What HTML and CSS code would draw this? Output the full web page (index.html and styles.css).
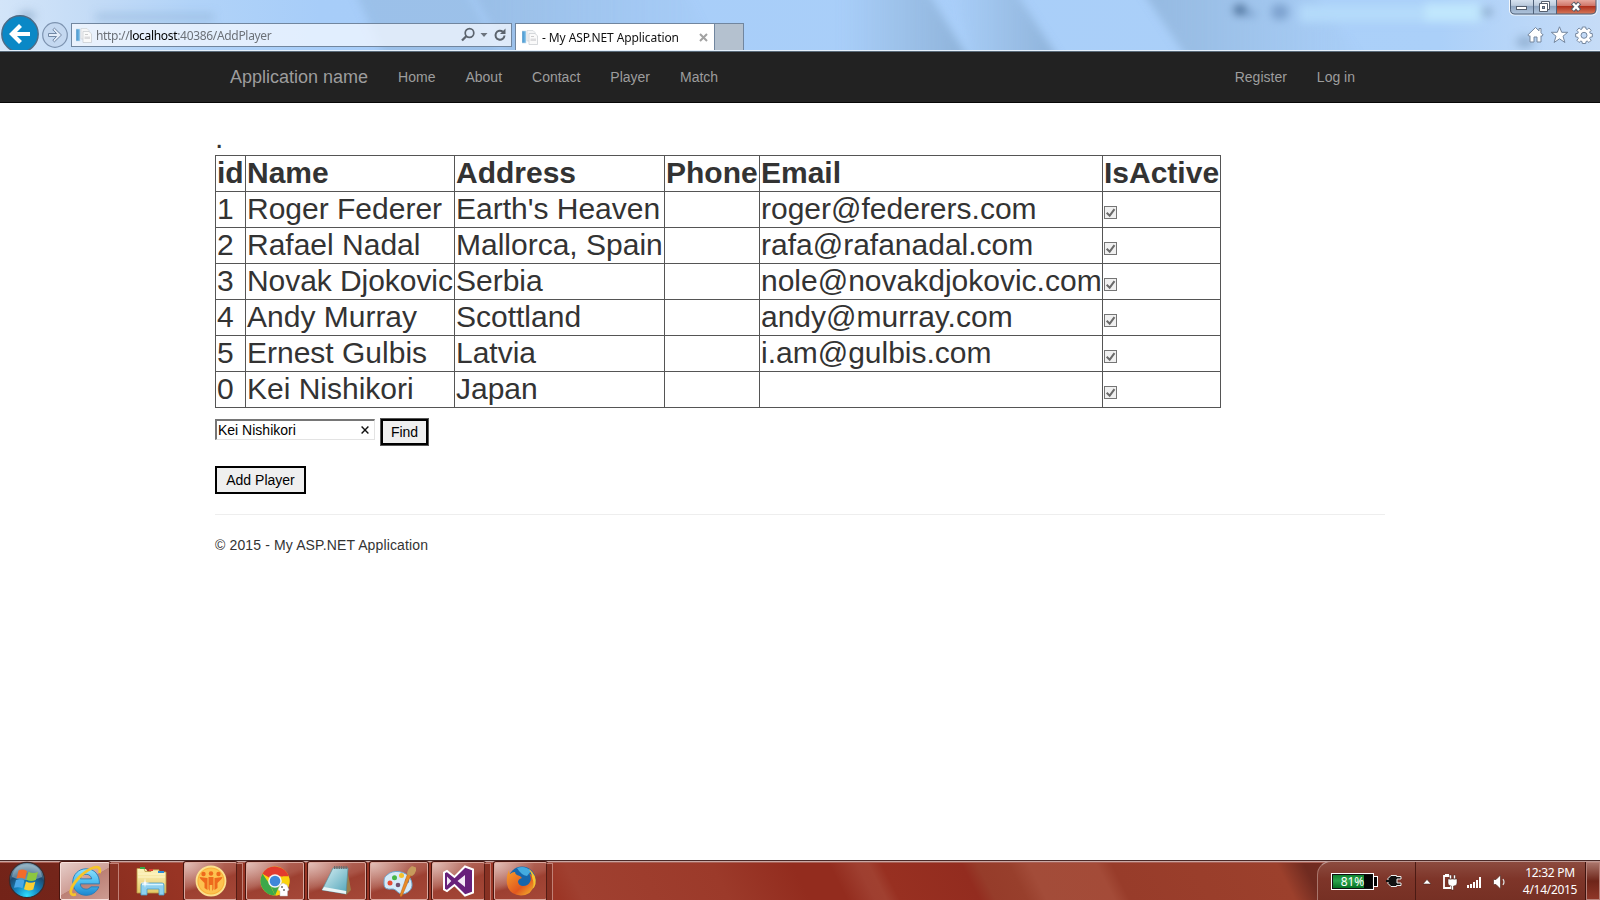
FILE: index.html
```html
<!DOCTYPE html>
<html lang="en">
<head>
<meta charset="utf-8">
<title>- My ASP.NET Application</title>
<link rel="stylesheet" href="styles.css">
</head>
<body>
<svg width="0" height="0" class="defs">
  <defs>
    <linearGradient id="blueBar" x1="0" x2="1"><stop offset="0" stop-color="#3f8fc9"/><stop offset="1" stop-color="#7cc0ea"/></linearGradient>
    <radialGradient id="orb" cx=".5" cy=".95" r=".85"><stop offset="0" stop-color="#2fe0ff"/><stop offset=".4" stop-color="#1485c0"/><stop offset=".75" stop-color="#1d4a70"/><stop offset="1" stop-color="#6d93ab"/></radialGradient>
    <linearGradient id="ieBlue" x1="0" y1="0" x2="0" y2="1"><stop offset="0" stop-color="#8fe0fc"/><stop offset=".5" stop-color="#4dbdf0"/><stop offset="1" stop-color="#1c86cf"/></linearGradient>
    <linearGradient id="folder" x1="0" y1="0" x2="0" y2="1"><stop offset="0" stop-color="#fff6c0"/><stop offset="1" stop-color="#e3c765"/></linearGradient>
    <linearGradient id="pad" x1="0" y1="0" x2="1" y2="1"><stop offset="0" stop-color="#d8f0f4"/><stop offset="1" stop-color="#4fa3b8"/></linearGradient>
    <linearGradient id="fox" x1="0" y1="0" x2="1" y2="1"><stop offset="0" stop-color="#f7a02b"/><stop offset=".6" stop-color="#e2581e"/><stop offset="1" stop-color="#f5c02e"/></linearGradient>
    <symbol id="page" viewBox="0 0 16 16">
      <rect x="0" y="2" width="4" height="12" fill="url(#blueBar)" stroke="#c5dbe9" stroke-width=".6"/>
      <path d="M5 1.500h6l2 2V12H5z" fill="#f4f5f6" stroke="#d0d4d8" stroke-width=".7"/>
      <path d="M7 4.500h6l2.500 2.300v8.700H7z" fill="#fafafa" stroke="#c6cacf" stroke-width=".7"/>
      <path d="M8.500 9.500h5.500v2.500H8.500z" fill="#dcdcde"/><path d="M9 7.500h3" stroke="#ccc"/>
    </symbol>
    <symbol id="check" viewBox="0 0 13 13">
      <rect x=".5" y=".5" width="12" height="12" fill="#f0f0f0" stroke="#757575"/>
      <path d="M2.700 6.700l3 3L10.500 3.200" fill="none" stroke="#6a6a6a" stroke-width="2"/>
    </symbol>
  </defs>
</svg>

<header class="chrome">
  <svg class="glass" width="1600" height="50" viewBox="0 0 1600 50">
    <defs>
      <linearGradient id="sky" x1="0" x2="1"><stop offset="0" stop-color="#d3e5f9"/><stop offset=".06" stop-color="#c3dbf6"/><stop offset=".12" stop-color="#b1d3f8"/><stop offset=".2" stop-color="#a7cdf9"/><stop offset=".9" stop-color="#abd0f9"/><stop offset="1" stop-color="#c6dcf7"/></linearGradient>
      <linearGradient id="shade" x1="0" x2="1"><stop offset="0" stop-color="#8fb3d9" stop-opacity="0"/><stop offset="1" stop-color="#8cb0d6"/></linearGradient>
      <linearGradient id="shadeOut" x1="0" x2="1"><stop offset="0" stop-color="#8cb0d6"/><stop offset="1" stop-color="#8fb3d9" stop-opacity="0"/></linearGradient>
      <filter id="soft" x="-5%" y="-50%" width="110%" height="200%"><feGaussianBlur stdDeviation="4"/></filter>
    </defs>
    <rect width="1600" height="50" fill="url(#sky)"/>
    <g filter="url(#soft)">
      <path d="M350-20h110l50 90h-120z" fill="#8fb3da" opacity=".5"/>
      <path d="M465-20h213l50 90H515z" fill="url(#shadeOut)" opacity=".55"/>
      <path d="M840-20h80l56 90H840z" fill="url(#shade)"/>
      <path d="M950-20h58l58 90h-90z" fill="url(#shade)"/>
      <path d="M1135-20h170l65 90h-175z" fill="url(#shadeOut)" opacity=".75"/>
      <ellipse cx="27" cy="16" rx="9" ry="5" fill="#8baaca" opacity=".7"/>
      <rect x="96" y="13" width="118" height="8" fill="#91b4d9" opacity=".55"/>
      <ellipse cx="1240" cy="10" rx="7" ry="6" fill="#40658f" opacity=".85"/>
      <ellipse cx="1251" cy="14" rx="6" ry="3" fill="#7399c6" opacity=".8"/>
      <ellipse cx="1280" cy="12" rx="9" ry="8" fill="#7399c6" opacity=".8"/>
      <rect x="1300" y="5" width="182" height="17" fill="#b4dafa"/>
      <rect x="1425" y="3" width="55" height="19" fill="#c0e6fd"/>
      <ellipse cx="1487" cy="12" rx="6" ry="4" fill="#7f9fbd" opacity=".8"/>
      <ellipse cx="1525" cy="42" rx="9" ry="6" fill="#8ba9cb" opacity=".8"/>
    </g>
  </svg>
  <div class="window-buttons">
    <svg width="89" height="16" viewBox="0 0 89 16">
      <defs>
        <linearGradient id="btnGlass" x1="0" y1="0" x2="0" y2="1"><stop offset="0" stop-color="#dbe6f2"/><stop offset=".4" stop-color="#bccbdd"/><stop offset=".45" stop-color="#8fa5c0"/><stop offset="1" stop-color="#b5cae2"/></linearGradient>
        <linearGradient id="btnRed" x1="0" y1="0" x2="0" y2="1"><stop offset="0" stop-color="#e7a99f"/><stop offset=".4" stop-color="#d0776a"/><stop offset=".45" stop-color="#ae2f1c"/><stop offset="1" stop-color="#d77b5c"/></linearGradient>
      </defs>
      <path d="M.5-1v11q0 5 5 5H83q5 0 5-5V-1z" fill="url(#btnGlass)" stroke="#f2f7fc" stroke-width="1"/>
      <path d="M48 0h39v10q0 4-4 4H48z" fill="url(#btnRed)"/>
      <path d="M1.500-1v10.500q0 4.500 4.500 4.500H82q5 0 5-5V-1M24.500 0v14M47.500 0v14" fill="none" stroke="#4f6179"/>
      <rect x="7.500" y="6.500" width="10" height="3" fill="#fff" stroke="#555f6e"/>
      <path d="M32.500 1.500h8v8h-8z" fill="#fff" stroke="#555f6e"/><path d="M30.500 3.500h8v8h-8z" fill="#fff" stroke="#555f6e"/><rect x="33.500" y="6.500" width="2" height="2" fill="#8fa5c0" stroke="#555f6e"/>
      <path d="M63.500 3l7 7.500M70.500 3l-7 7.500" stroke="#555b68" stroke-width="4.500"/><path d="M64 3.500l6 6.500M70 3.500l-6 6.500" stroke="#fff" stroke-width="2.400"/>
    </svg>
  </div>
  <div class="toolbar">
    <svg class="nav-back" width="39" height="35" viewBox="0 0 39 35"><circle cx="19" cy="19" r="18.200" fill="#0a88c6" stroke="#4f6b85" stroke-width="1.400"/><path d="M29 19H12M19.500 10.500L11 19l8.500 8.500" fill="none" stroke="#fff" stroke-width="4.200"/></svg>
    <svg class="nav-forward" width="26" height="26" viewBox="0 0 26 26"><circle cx="13" cy="13" r="12.300" fill="#c4d8f0" stroke="#7d93b0" stroke-width="1.200"/><path d="M6.500 11.500h8L10.800 7.700l1.700-1.500L19.500 13l-7 6.800-1.700-1.500 3.700-3.800h-8z" fill="#e3ecf8" stroke="#7288a5" stroke-width="1"/></svg>
    <div class="address">
      <svg width="16" height="16"><use href="#page"/></svg>
      <span class="url">http://<b>localhost</b>:40386/AddPlayer</span>
      <svg class="address-tools" width="46" height="16" viewBox="0 0 46 16"><circle cx="8.500" cy="6" r="4.300" fill="none" stroke="#5c646e" stroke-width="1.700"/><path d="M5.500 9L1 13.500" stroke="#5c646e" stroke-width="2.300"/><path d="M19.500 6h7l-3.500 4z" fill="#6c747e"/><path d="M43.500 8.500a4.500 4.500 0 1 1-1.600-3.700" fill="none" stroke="#5c646e" stroke-width="2"/><path d="M44.500 1.500v5.500H39z" fill="#5c646e"/></svg>
    </div>
    <div class="tab">
      <svg width="16" height="16"><use href="#page"/></svg>
      <span class="tab-title">- My ASP.NET Application</span>
      <svg class="tab-close" width="9" height="9" viewBox="0 0 9 9"><path d="M1 1l7 7M8 1L1 8" stroke="#a2a2a2" stroke-width="2"/></svg>
    </div>
    <div class="new-tab"></div>
    <svg class="chrome-icons" width="66" height="18" viewBox="0 0 66 18">
      <g fill="#fff" stroke="#74869e" stroke-width="1" stroke-linejoin="round">
        <path d="M8.500 1.500L.8 9l1.400 1.300.8-.6V16h4v-5h3v5h4V9.700l.8.600L16.200 9 14 6.800V2.500h-2v2.300z"/>
        <path d="M32.500.8l2.200 5.500h6L36 10.200l1.900 6.300-5.400-3.700-5.400 3.700L29 10.200l-4.700-3.900h6z"/>
        <path fill-rule="evenodd" d="M55.300 1h3.400l.3 2 1.200.5L61.900 2l2.300 2.300-1.500 1.700.5 1.300 2.100.3v3.300l-2.100.3-.5 1.300 1.500 1.700-2.300 2.300-1.700-1.500-1.200.5-.3 2h-3.400l-.3-2-1.200-.5-1.700 1.500-2.300-2.300 1.500-1.700-.5-1.300-2.100-.3V7.600l2.100-.3.500-1.300-1.500-1.700L52.100 2l1.700 1.500L55 3zM57 6.300a3 3 0 1 0 0 6 3 3 0 0 0 0-6z"/>
      </g>
    </svg>
  </div>
</header>

<nav class="navbar">
  <span class="brand">Application name</span>
  <a>Home</a><a>About</a><a>Contact</a><a>Player</a><a>Match</a>
  <a class="register">Register</a><a>Log in</a>
</nav>

<main class="content">
  <div class="dot">.</div>
  <table class="players">
    <colgroup><col class="c-id"><col class="c-name"><col class="c-address"><col class="c-phone"><col class="c-email"><col class="c-active"></colgroup>
    <tr><th>id</th><th>Name</th><th>Address</th><th>Phone</th><th>Email</th><th>IsActive</th></tr>
    <tr><td>1</td><td>Roger Federer</td><td>Earth's Heaven</td><td></td><td>roger@federers.com</td><td><svg class="check"><use href="#check"/></svg></td></tr>
    <tr><td>2</td><td>Rafael Nadal</td><td>Mallorca, Spain</td><td></td><td>rafa@rafanadal.com</td><td><svg class="check"><use href="#check"/></svg></td></tr>
    <tr><td>3</td><td class="tight">Novak Djokovic</td><td>Serbia</td><td></td><td>nole@novakdjokovic.com</td><td><svg class="check"><use href="#check"/></svg></td></tr>
    <tr><td>4</td><td>Andy Murray</td><td>Scottland</td><td></td><td>andy@murray.com</td><td><svg class="check"><use href="#check"/></svg></td></tr>
    <tr><td>5</td><td>Ernest Gulbis</td><td>Latvia</td><td></td><td>i.am@gulbis.com</td><td><svg class="check"><use href="#check"/></svg></td></tr>
    <tr><td>0</td><td>Kei Nishikori</td><td>Japan</td><td></td><td></td><td><svg class="check"><use href="#check"/></svg></td></tr>
  </table>
  <div class="search">
    <div class="field"><span>Kei Nishikori</span><svg width="8" height="8" viewBox="0 0 8 8"><path d="M.6.6l6.800 6.800M7.400.6L.6 7.400" stroke="#111" stroke-width="1.400"/></svg></div>
    <button class="btn find">Find</button>
  </div>
  <button class="btn add">Add Player</button>
  <hr>
  <footer>© 2015 - My ASP.NET Application</footer>
</main>

<div class="taskbar">
  <svg class="start" width="38" height="38" viewBox="0 0 38 38">
    <circle cx="19" cy="19" r="17.600" fill="url(#orb)" stroke="#3d2a2b" stroke-width="1.200"/>
    <path d="M4 16C5 7 12 3 19 3s14 4 15 13c-8 4-22 4-30 0z" fill="#cfe1e8" opacity=".38"/>
    <path d="M10.500 9.500q4-2 8.500.5l-2 8q-4.500-2-8.500-.500z" fill="#f26b2a"/>
    <path d="M20.500 10.700q4.500 2.500 9.500.3l-2.200 8q-4.800 2.200-9.300-.2z" fill="#8dc63f"/>
    <path d="M8 19q4.500-1.600 8.500.5l-2 7.800q-4-2-8.500-.5z" fill="#4aa8e8"/>
    <path d="M18 20.500q4.500 2.300 9.300.2l-2 7.800q-4.800 2-9.300-.2z" fill="#fccf32"/>
  </svg>
  <div class="task active stack">
    <svg width="34" height="34" viewBox="0 0 32 32"><path d="M17 4.500c-7 0-12.500 5.500-12.500 12.500S10 29.500 17 29.500c5.500 0 10-3 12-8h-7.500c-1 1.500-2.500 2.200-4.500 2.200-3.200 0-5.300-1.900-5.500-5H29.500C30 10.500 25 4.500 17 4.500zM11.600 14c.6-2.700 2.700-4.300 5.400-4.300 2.900 0 4.900 1.600 5.300 4.300z" fill="url(#ieBlue)" stroke="#1f7bb9" stroke-width=".8"/><path d="M29.500 8.500c1.500-4.500-.5-6.500-5-5.200C17 5.500 7 14.500 3.500 22.500c-2 5-.5 7.500 4 6" fill="none" stroke="#f6c52a" stroke-width="2.600"/></svg>
  </div>
  <svg class="explorer" width="34" height="32" viewBox="0 0 34 32"><path d="M2 4h9l2 3h-9z" fill="#f8efb2"/><path d="M2 3.500h7l1 3h6V4.800h8V7h7v21H2z" fill="url(#folder)" stroke="#b99a44" stroke-width=".8"/><path d="M5 2h5v2H5z" fill="#35a847"/><path d="M14 4h4v2h-4z" fill="#dd3c30"/><path d="M23 6h6v2h-6z" fill="#2c8fd8"/><path d="M3 9h27M3 12h27" stroke="#fff7c9"/><path d="M6 30V20q0-2 2-2h19q2 0 2 2v10h-5v-6H12v6z" fill="#8fd0ee" stroke="#4a9cc6" stroke-width=".8"/><path d="M7 19.500h21" stroke="#d9f4ff" stroke-width="1.500"/><path d="M10 13l.7 4.300 4.300.7-4.300.7L10 23l-.7-4.300L5 18l4.300-.7z" fill="#fff"/></svg>
  <div class="task wide stack">
    <svg width="32" height="32" viewBox="0 0 32 32"><circle cx="16" cy="16" r="14.500" fill="#f9b23a" stroke="#fbe08d" stroke-width="1.800"/><circle cx="16" cy="16" r="12.500" fill="#ffc95a" opacity=".7"/><g fill="#ee6a1c"><circle cx="8.500" cy="9" r="2.200"/><circle cx="16" cy="8.500" r="2.200"/><circle cx="23.500" cy="9" r="2.200"/><path d="M4.500 12l8 1v12l-3-2v-5l-4-4zM13.500 12h5v12l-1.200 2v-6h-2.600v6l-1.200-2zM27.500 12l-8 1v12l3-2v-5l4-4z"/></g></svg>
  </div>
  <div class="task">
    <svg width="32" height="32" viewBox="0 0 32 32"><circle cx="16" cy="16" r="14.500" fill="#fbd40c"/><path d="M16 16L3.500 8.800A14.500 14.500 0 0 1 29.800 11.500H16z" fill="#e33b2e"/><path d="M3.500 8.700l7.500 11 5 10.800A14.500 14.500 0 0 1 3.500 8.700z" fill="#3da84a"/><path d="M11 19l5 11.500 5-11z" fill="#3da84a"/><path d="M17 30.500l6-11.500 1-7.500h5.800A14.500 14.500 0 0 1 17 30.500z" fill="#fbd40c"/><circle cx="16" cy="16" r="6.800" fill="#f5f5f5"/><circle cx="16" cy="16" r="5.300" fill="#3f87d9"/><path d="M21 31v-5l-2-1 2-5 3-2 4 2 2 5-1.500 1v5z" fill="#fff" stroke="#bcbcbc" stroke-width=".5"/><circle cx="23" cy="22" r=".8"/><path d="M24 25h2" stroke="#222"/></svg>
  </div>
  <div class="task">
    <svg width="34" height="32" viewBox="0 0 34 32"><path d="M27 3l4 22-5 5-3-3z" fill="#9b7d49"/><path d="M13 3h15l-2 26L2 25z" fill="url(#pad)" stroke="#5a8d99" stroke-width=".7"/><path d="M2 25l24 4 .2-3L4 22z" fill="#e7f4f6"/><path d="M14 2.500h14" stroke="#6b6b6b" stroke-width="3" stroke-dasharray="1.300 1"/></svg>
  </div>
  <div class="task">
    <svg width="34" height="32" viewBox="0 0 34 32"><path d="M5 10C11 4 24 6 28 13s2 13-5 15.500-8-5-13-4.500-8 0-8-6 1-6 3-8z" fill="#d6eaf8" stroke="#6da6cf"/><circle cx="8" cy="18" r="2.500" fill="#e84b33"/><circle cx="12.500" cy="12.800" r="2.500" fill="#45b648"/><circle cx="19.500" cy="10.500" r="2.500" fill="#f4c12b"/><circle cx="16" cy="20" r="2.300" fill="#705070"/><circle cx="25" cy="16" r="2.200" fill="#4a90dc"/><path d="M29 10L20 31q-2 2-2-1l7.500-21z" fill="#e98a24" stroke="#b4601b" stroke-width=".5"/><path d="M25 9.500Q25 4 30 1l4 1.500q1 5-4 8.500z" fill="#c69a5c"/></svg>
  </div>
  <div class="task wide stack">
    <svg width="34" height="32" viewBox="0 0 34 32"><path d="M23 1.500l8 3v23l-8 3L12.500 20 5 26l-3-1.700V7.700L5 6l7.500 6z" fill="#68217a" stroke="#fff" stroke-width="2"/><path d="M5 11.500v9l4.300-4.500zM15.500 16L23 22v-12z" fill="#f3eaf5"/></svg>
  </div>
  <div class="task wide stack">
    <svg width="32" height="32" viewBox="0 0 32 32"><circle cx="17" cy="15" r="13.500" fill="#1566ac"/><path d="M12 3q8-3 14 3l-4 5q-6-1-10-8z" fill="#44abe0"/><path d="M4 5q0 3 1 4 2-2 5-2 0 2 2 3 4 1 5 3-4 1-4 4 1 4 5 4 5 0 7-4 2-4-1-9 6 4 5 12-2 10-13 10.500Q4 30 2 19 1 11 4 5z" fill="url(#fox)"/><path d="M24 4q8 6 6.500 15-1 4-3 5 2-6 0-10-1-6-3.500-10z" fill="#f7c32e"/></svg>
  </div>
  <div class="tray">
    <div class="power">
      <div class="battery"><span>81%</span></div><i class="battery-tip"></i>
      <svg class="plug" width="18" height="14" viewBox="0 0 18 14"><path d="M6 1.500h5.500v1H16v2.500h-4v4h4v2.500h-4.500v1H6L3 9.500v-5z" fill="#111" stroke="#eee" stroke-width="1"/><path d="M1 7h3" stroke="#111" stroke-width="2"/></svg>
    </div>
    <svg class="status" width="90" height="20" viewBox="0 0 90 20">
      <path d="M0 12h8L4 7.500z" fill="#fff" stroke="#3d201c" stroke-width=".5"/>
      <path d="M27 4h-6v12h7v-3" fill="none" stroke="#fff" stroke-width="1.800"/><path d="M22 2.500h4" stroke="#fff"/><path d="M25 7h9v4q0 3-3.500 3v4h-2v-4Q25 14 25 11zM26.500 3h2v4h-2zM30.500 3h2v4h-2z" fill="#fff" stroke="#43201b" stroke-width=".5"/>
      <g fill="#fff"><path d="M44 13h2v3h-2zM47 12h2v4h-2zM50 10h2v6h-2zM53 8h2v8h-2zM56 5h2v11h-2z"/></g>
      <path d="M70.500 7.500H73l4.500-4.500v14L73 12.500h-2.500z" fill="#fff" stroke="#58302a" stroke-width=".7"/><path d="M80 7q2 3 0 6" fill="none" stroke="#ddd" stroke-width="1.200"/>
    </svg>
    <div class="clock"><span>12:32 PM</span><span>4/14/2015</span></div>
    <div class="show-desktop"></div>
  </div>
</div>
</body>
</html>
```
FILE: styles.css
```css
* { box-sizing: border-box; }
html, body { margin: 0; }
body {
  width: 1600px; height: 900px; overflow: hidden;
  display: flex; flex-direction: column;
  background: #fff; color: #333;
  font: 14px/20px "Liberation Sans", Arial, sans-serif;
}
svg { display: block; flex: none; }
.defs { position: absolute; }

/* Browser frame */
.chrome {
  position: relative; flex: none; height: 52px;
  border-bottom: 1px solid #586978;
  background: #e4f0fb;
  font-family: "Noto Sans", "Open Sans", sans-serif;
}
.glass { position: absolute; left: 0; top: 0; }
.window-buttons { position: absolute; right: 2px; top: 0; }
.toolbar { position: relative; height: 50px; padding-left: 1px; display: flex; align-items: flex-end; }
.nav-forward { margin: 0 0 2px 2px; }
.address {
  width: 441px; height: 24px; margin: 0 0 3px 3px; padding-left: 4px;
  display: flex; align-items: center;
  border: 1px solid #71869f; background: rgba(247, 250, 255, .73);
}
.url { margin-left: 4px; padding-top: 2px; width: 177px; font-size: 12px; letter-spacing: -.32px; color: #6c7178; white-space: nowrap; }
.url b { font-weight: 400; color: #000; }
.address-tools { margin-left: auto; margin-right: 4px; }
.tab {
  width: 200px; height: 27px; margin-left: 3px; padding-left: 6px;
  display: flex; align-items: center;
  background: #fff; border: 1px solid #71869f; border-bottom: 0;
}
.tab-title { margin-left: 4px; padding-top: 2px; font-size: 12px; letter-spacing: -.09px; color: #111; white-space: nowrap; }
.tab-close { margin-left: auto; margin-right: 6px; }
.new-tab { width: 29px; height: 27px; background: #b4c1cf; border: 1px solid #71869f; border-width: 1px 1px 0 0; }
.chrome-icons { margin: 0 7px 6px auto; }

/* Site navigation */
.navbar {
  flex: none; height: 51px; padding: 0 230px;
  display: flex; align-items: center; gap: 30px;
  background: #222; border-bottom: 1px solid #080808; color: #9d9d9d;
}
.brand { font-size: 18px; }
.register { margin-left: auto; }
.navbar a:last-child { margin-right: 15px; }

/* Page */
.content { flex: 1; width: 1170px; margin-left: 215px; padding-top: 18px; }
.dot { height: 34px; font-size: 30px; line-height: 33px; }
.players { width: 1005px; table-layout: fixed; border-collapse: collapse; font-size: 30px; line-height: 31px; }
.c-id { width: 30px; }
.c-name { width: 209px; }
.c-address { width: 210px; }
.c-phone { width: 95px; }
.c-email { width: 343px; }
.c-active { width: 118px; }
.players tr { height: 36px; }
.players th, .players td { padding: 1px; border: 1px solid #555; text-align: left; vertical-align: top; white-space: nowrap; }
.players .tight { letter-spacing: -.06px; }
.check { width: 13px; height: 13px; margin-top: 13px; }
.search { display: flex; align-items: flex-start; gap: 5px; margin-top: 10px; color: #000; }
.field {
  width: 160px; height: 21px; margin-top: 1px; padding: 0 5px 0 1px;
  display: flex; align-items: center; justify-content: space-between;
  border: 2px solid #e3e3e3; border-top-color: #767676; border-left-color: #767676;
  border-right-width: 1px; border-bottom-width: 1px;
}
.btn { display: block; height: 28px; padding: 0; background: #efefef; border: 2px solid #000; font: inherit; color: #000; }
.find { width: 49px; border-width: 3px; outline: 1px solid #555; outline-offset: -1px; }
.add { width: 91px; margin-top: 20px; }
hr { height: 1px; margin: 20px 0; border: 0; background: #eee; }
footer { letter-spacing: .13px; }

/* Taskbar */
.taskbar {
  flex: none; height: 40px; display: flex;
  border-top: 1px solid #4a2a28; box-shadow: inset 0 1px #c9a6a2, inset 0 2px #a95f54;
  background: linear-gradient(63deg, #732318 0, #74251a 62px, #8d2f20 110px, #983424 170px, #9c3626 500px, #a04030 520px, #9c3a2a 650px, #932c1e 722px, #932c1e 755px, #9f3f30 780px, #a04030 790px, #983021 802px, #932c1f 873px, #963c2a 887px, #983f2c 915px, #a34c39 933px, #a44b38 993px, #983c2a 1007px, #9c402c 1154px, #702b20 1178px, #7b2f23 1444px);
  color: #fff; font-family: "Noto Sans", "Open Sans", sans-serif;
}
.start { margin: 0 14px 0 8px; }
.task {
  position: relative; flex: none; width: 58px; height: 38px; margin: 1px 4px 0 0;
  display: flex; align-items: center; justify-content: center;
  border: 1px solid #dba79d; border-radius: 2px; box-shadow: 0 0 0 1px #47150f;
  background: radial-gradient(ellipse at 0 0, rgba(255, 245, 240, .6), transparent 55%), linear-gradient(160deg, #b97064 0, #a95446 45%, #9d4031 55%, #a54838 100%);
}
.stack { margin-right: 9px; width: 53px; }
.stack::after {
  content: ""; position: absolute; left: 100%; top: 0; width: 5px; height: 36px;
  border: 1px solid #c18075; border-left: 1px solid #541c14; background: #873123;
}
.active { width: 50px; margin-right: 25px; background: linear-gradient(150deg, #e6cdc8 0, #cf9f97 50%, #bb8075 51%, #cd9b91 100%); border-color: #f6ded9; }
.active::after { width: 8px; }
.explorer { margin: 4px 15px 0 0; }
.tray {
  width: 283px; height: 39px; margin-left: auto; display: flex;
  border-top: 1px solid #bd9792; border-left: 1px solid #a9766c; border-radius: 14px 0 0 0;
  background: linear-gradient(#8c4b3f, #7e3529 45%, #763024);
}
.power { width: 98px; padding-left: 13px; display: flex; align-items: center; border-right: 1px solid #4b1a13; }
.battery {
  width: 43px; height: 17px; border: 1px solid #fff;
  background: linear-gradient(90deg, transparent 32px, #050505 32px), linear-gradient(#0b7f2c, #2ba44c 45%, #00691c);
  box-shadow: inset 0 0 0 1px #111;
  font-size: 12px; line-height: 15px; text-align: center;
}
.battery-tip { width: 4px; height: 11px; background: #000; border: 1px solid #fff; border-left: 0; }
.plug { margin-left: 7px; }
.status { margin: 10px 0 0 7px; }
.clock { margin-left: auto; width: 72px; padding-top: 2px; display: flex; flex-direction: column; text-align: center; font-size: 12px; line-height: 17px; letter-spacing: -.3px; }
.show-desktop { width: 14px; border: 1px solid #b78279; background: linear-gradient(#a87369, #6e2519 50%, #8f3728); box-shadow: -1px 0 #3f140f; }
```
